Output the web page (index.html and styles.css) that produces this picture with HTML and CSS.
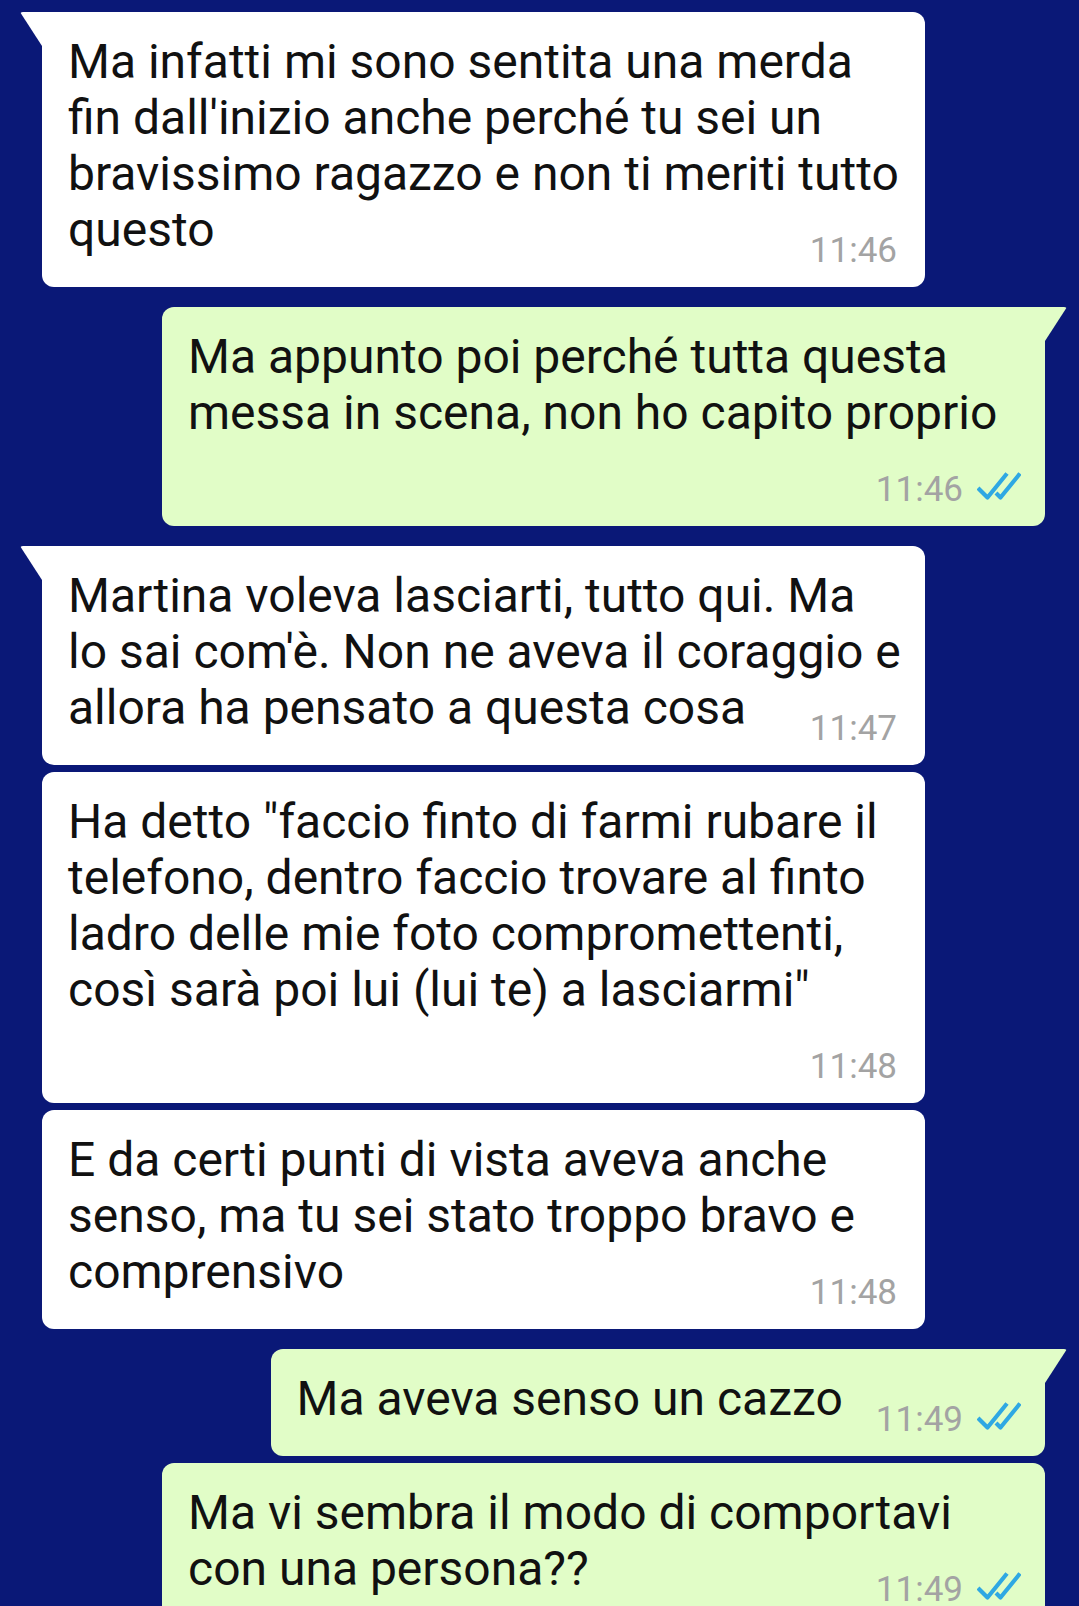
FILE: index.html
```html
<!DOCTYPE html>
<html lang="it">
<head>
    <meta charset="UTF-8">
    <meta name="viewport" content="width=device-width, initial-scale=1.0">
    <title>Chat</title>
    <link rel="stylesheet" href="styles.css">
</head>
<body>
    <div class="chat">
        <div class="msg in tail">
            <p class="text">Ma infatti mi sono sentita una merda fin dall'inizio anche perché tu sei un bravissimo ragazzo e non ti meriti tutto questo<span class="meta"><span class="time">11:46</span></span></p>
        </div>
        <div class="msg out tail">
            <p class="text">Ma appunto poi perché tutta questa messa in scena, non ho capito proprio<span class="meta"><span class="time">11:46</span><svg class="ticks" viewBox="0 0 44 28"><path d="M1 16 L10.5 25.5 L30 1.5"/><path d="M19 21 L23.5 25.5 L43 1.5"/></svg></span></p>
        </div>
        <div class="msg in tail">
            <p class="text">Martina voleva lasciarti, tutto qui. Ma lo sai com'è. Non ne aveva il coraggio e allora ha pensato a questa cosa<span class="meta"><span class="time">11:47</span></span></p>
        </div>
        <div class="msg in cont">
            <p class="text">Ha detto "faccio finto di farmi rubare il telefono, dentro faccio trovare al finto ladro delle mie foto compromettenti, così sarà poi lui (lui te) a lasciarmi"<span class="meta"><span class="time">11:48</span></span></p>
        </div>
        <div class="msg in cont">
            <p class="text">E da certi punti di vista aveva anche senso, ma tu sei stato troppo bravo e comprensivo<span class="meta"><span class="time">11:48</span></span></p>
        </div>
        <div class="msg out tail">
            <p class="text">Ma aveva senso un cazzo<span class="meta"><span class="time">11:49</span><svg class="ticks" viewBox="0 0 44 28"><path d="M1 16 L10.5 25.5 L30 1.5"/><path d="M19 21 L23.5 25.5 L43 1.5"/></svg></span></p>
        </div>
        <div class="msg out cont">
            <p class="text">Ma vi sembra il modo di comportavi con una persona??<span class="meta"><span class="time">11:49</span><svg class="ticks" viewBox="0 0 44 28"><path d="M1 16 L10.5 25.5 L30 1.5"/><path d="M19 21 L23.5 25.5 L43 1.5"/></svg></span></p>
        </div>
    </div>
</body>
</html>
```

FILE: styles.css
```css
:root {
    --chat-bg: #0a1877;
    --bubble-in: #ffffff;
    --bubble-out: #e1fdc7;
    --text-color: #111;
    --time-color: #a3a3a3;
    --tick-color: #2fa8e3;
}

body {
    margin: 0;
    background-color: var(--chat-bg);
    font-family: Roboto, "Noto Sans", sans-serif;
}
.chat {
    display: flex;
    flex-direction: column;
    padding: 12px 0 40px;
}
.msg {
    position: relative;
    box-sizing: border-box;
    width: fit-content;
    max-width: 883px;
    padding: 22px 22px 16px 26px;
    border-radius: 12px;
    background-color: var(--bubble-in);
}
.msg.in {
    align-self: flex-start;
    margin-left: 42px;
}
.msg.out {
    align-self: flex-end;
    margin-right: 34px;
    background-color: var(--bubble-out);
}
.msg.tail {
    margin-top: 20px;
}
.msg.tail:first-child {
    margin-top: 0;
}
.msg.cont {
    margin-top: 7px;
}
.msg.in.tail {
    border-top-left-radius: 0;
}
.msg.out.tail {
    border-top-right-radius: 0;
}
.msg.tail::before {
    content: "";
    position: absolute;
    top: 0;
    width: 22px;
    height: 34px;
    background-color: inherit;
}
.msg.in.tail::before {
    left: -22px;
    clip-path: polygon(0 0, 100% 0, 100% 100%);
    border-top-left-radius: 3px;
}
.msg.out.tail::before {
    right: -22px;
    clip-path: polygon(0 0, 100% 0, 0 100%);
    border-top-right-radius: 3px;
}
.text {
    display: flow-root;
    margin: 0;
    font-size: 48px;
    line-height: 56px;
    color: var(--text-color);
}
.meta {
    float: right;
    display: flex;
    align-items: flex-start;
    gap: 14px;
    margin: 28px 2px 0 33px;
    font-size: 35px;
    line-height: 41px;
    color: var(--time-color);
}
.msg.in .meta {
    margin-right: 6px;
}
.ticks {
    width: 44px;
    height: 28px;
    margin-top: 3px;
    fill: none;
    stroke: var(--tick-color);
    stroke-width: 4.2;
    stroke-linejoin: round;
}
```
